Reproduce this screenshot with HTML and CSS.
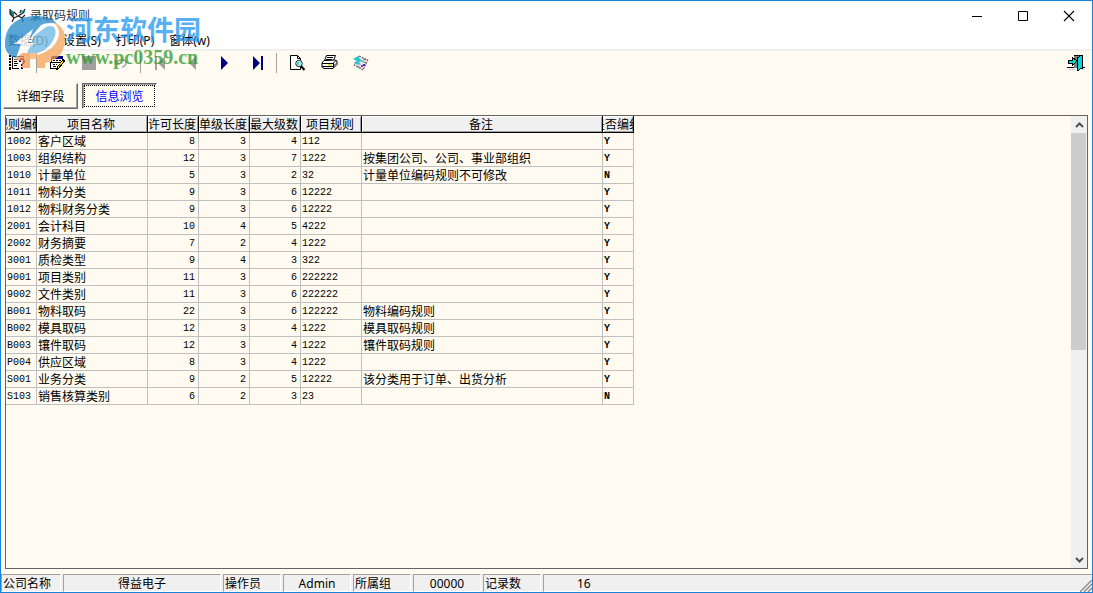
FILE: index.html
```html
<!DOCTYPE html>
<html lang="zh-CN">
<head>
<meta charset="utf-8">
<title>录取码规则</title>
<link rel="stylesheet" href="styles.css">
</head>
<body>
<div class="window">
  <header class="titlebar">
    <svg class="app-icon" width="18" height="16" viewBox="0 0 18 16"><path d="M1 1l4 3v5L1 6z" fill="#12806f"/><path d="M11 2h5v3h-4z" fill="#5bd6c8"/><path d="M1 1v5l4 4 4-2 4 2 3-3M5 4l3 3M16 1l-2 4-5 3M5 10l-2 4M13 10l1 4M12 2l-1 3" fill="none" stroke="#222" stroke-width="1.2"/></svg>
    <h1 class="title">录取码规则</h1>
    <div class="window-controls">
      <button class="control" aria-label="最小化"><svg width="12" height="12" viewBox="0 0 12 12"><path d="M1 6.5h10" stroke="#000"/></svg></button>
      <button class="control" aria-label="最大化"><svg width="12" height="12" viewBox="0 0 12 12"><path d="M1.500 1.500h9v9h-9z" fill="none" stroke="#000"/></svg></button>
      <button class="control" aria-label="关闭"><svg width="12" height="12" viewBox="0 0 12 12"><path d="M1 1l10 10M11 1L1 11" stroke="#000" stroke-width="1.100"/></svg></button>
    </div>
  </header>

  <nav class="menubar">
    <button class="menu disabled">数据(D)</button>
    <button class="menu">设置(S)</button>
    <button class="menu">打印(P)</button>
    <button class="menu">窗体(w)</button>
  </nav>

  <div class="toolbar">
    <button class="tool" aria-label="字段说明"><svg width="16" height="16" viewBox="0 0 16 16" shape-rendering="crispEdges"><path d="M0 1h15v13H0z" fill="#fff"/><path d="M0 0h2v2H0zM0 3h2v2H0zM0 6h2v2H0zM0 9h2v2H0zM0 12h2v3H0zM3 1h1v13H3zM4 1h11v1H4zM4 13h6v1H4zM5 4h4v1H5zM5 6h3v1H5zM5 8h4v1H5zM5 10h3v1H5z" fill="#000"/><path d="M11 3h4v2h-4zM10 5h2v2h-2zM14 5h2v3h-2zM13 8h2v1h-2zM12 9h2v2h-2zM12 12h2v2h-2z" fill="#000080"/></svg></button>
    <span class="separator"></span>
    <button class="tool" aria-label="编辑"><svg width="16" height="16" viewBox="0 0 16 16" shape-rendering="crispEdges"><path d="M2 3h12v4l-4 7H1V6z" fill="#fff"/><path d="M3 1h11v3H2V2z" fill="#000080"/><path d="M2 4h1v3H2zM13 4h1v3h-1zM1 7h10v1H1zM1 7h1v7H1zM1 13h8v1H1zM4 9h2v1H4zM7 9h1v1H7zM4 11h3v1H4zM4 5h2v1H4zM7 5h2v1H7zM10 5h2v1h-2z" fill="#000"/><path d="M14 4l2 2-6 8-3 1 1-3z" fill="#000"/><path d="M13 6h1v2h-1zM12 7h1v2h-1zM11 8h1v2h-1zM10 10h1v1h-1zM9 11h1v2H9z" fill="#ffe800"/></svg></button>
    <button class="tool" aria-label="保存" disabled><svg width="14" height="14" viewBox="0 0 14 14"><path d="M0 0h14v14H0z" fill="#a0a0a0"/></svg></button>
    <button class="tool" aria-label="撤消" disabled><svg width="14" height="14" viewBox="0 0 14 14"><path d="M1 4l1 4h4M2 8c2-5 10-6 10-1 0 2-2 4-4 4" fill="none" stroke="#a0a0a0" stroke-width="1.500"/></svg></button>
    <span class="separator"></span>
    <button class="tool" aria-label="第一条" disabled><svg width="14" height="14" viewBox="0 0 14 14"><path d="M1 0h2v14H1zM11 0v14L4 7z" fill="#a0a0a0"/></svg></button>
    <button class="tool" aria-label="上一条" disabled><svg width="14" height="14" viewBox="0 0 14 14"><path d="M10 0v14L3 7z" fill="#a0a0a0"/></svg></button>
    <button class="tool" aria-label="下一条"><svg width="14" height="14" viewBox="0 0 14 14"><path d="M3 0v14l7-7z" fill="#000080"/></svg></button>
    <button class="tool" aria-label="最后一条"><svg width="14" height="14" viewBox="0 0 14 14"><path d="M3 0v14l7-7zM11 0h2v14h-2z" fill="#000080"/></svg></button>
    <span class="separator"></span>
    <button class="tool" aria-label="预览"><svg width="16" height="16" viewBox="0 0 16 16"><path d="M1.500.5h7l3 3v11h-10z" fill="#fff" stroke="#000"/><path d="M8.500.5v3h3" fill="none" stroke="#000"/><circle cx="10" cy="8.500" r="3.300" fill="#a8eef2" stroke="#333"/><path d="M9 7v3" stroke="#0aa" /><path d="M12 11l3.500 4" stroke="#000" stroke-width="2"/></svg></button>
    <button class="tool" aria-label="打印"><svg width="17" height="16" viewBox="0 0 17 16"><path d="M5.500.5h9l-2 5h-9z" fill="#fff" stroke="#000"/><path d="M6 2.500h6M5 4.500h6" stroke="#000"/><path d="M3 5.500L1 8v4l2 1.500h9l4-4V6l-2-1z" fill="#fff" stroke="#000"/><path d="M1 8.500h11l3-3M1 11.500h11l3-3M12.500 8v5" fill="none" stroke="#000"/><path d="M7 10h4" stroke="#d8d800" stroke-width="1.500"/></svg></button>
    <button class="tool" aria-label="输出"><svg width="16" height="16" viewBox="0 0 16 16"><path d="M6 1l9 4-5 10L1 10z" fill="#e4e4e4" stroke="#444" stroke-dasharray="2 1"/><path d="M0 4l5-3 2 3 3 2-4 1 2 3-6-1 2-3z" fill="#28c8cf"/><path d="M10 4l3 1M9 6l4 2M4 11l4 2" stroke="#777"/><path d="M8 10h2v2H8z" fill="#d018a0"/><path d="M10 9h2v2h-2z" fill="#2038d8"/></svg></button>
    <button class="tool exit" aria-label="退出"><svg width="18" height="16" viewBox="0 0 18 16" shape-rendering="crispEdges"><path d="M7 0h8v13H7z" fill="#808080"/><path d="M7 0h9v1H7zM15 0h1v14h-1zM0 12h7v1H0zM15 12h3v1h-3z" fill="#000"/><path d="M10 3l5-3v13l-5 3z" fill="#00d8dc" stroke="#000"/><path d="M1 5h4V2l5 4-5 5V8H1z" fill="#00d8dc" stroke="#000"/><path d="M2 14h6v1H2zM15 14h2v1h-2z" fill="#ccc"/></svg></button>
  </div>

  <div class="tabs" role="tablist">
    <button class="tab" role="tab" aria-selected="false">详细字段</button>
    <button class="tab selected" role="tab" aria-selected="true"><span class="focus">信息浏览</span></button>
  </div>

  <main class="grid">
    <div class="grid-body">
      <table class="rules">
        <colgroup><col class="c-code"><col class="c-name"><col class="c-num"><col class="c-num"><col class="c-num"><col class="c-rule"><col class="c-note"><col class="c-flag"></colgroup>
        <thead>
          <tr><th><div class="head">规则编码</div></th><th><div class="head">项目名称</div></th><th><div class="head">许可长度</div></th><th><div class="head">单级长度</div></th><th><div class="head">最大级数</div></th><th><div class="head">项目规则</div></th><th><div class="head">备注</div></th><th><div class="head">是否编组</div></th></tr>
        </thead>
        <tbody>
          <tr><td>1002</td><td class="zh">客户区域</td><td class="num">8</td><td class="num">3</td><td class="num">4</td><td>112</td><td class="zh"></td><td class="flag">Y</td></tr>
          <tr><td>1003</td><td class="zh">组织结构</td><td class="num">12</td><td class="num">3</td><td class="num">7</td><td>1222</td><td class="zh">按集团公司、公司、事业部组织</td><td class="flag">Y</td></tr>
          <tr><td>1010</td><td class="zh">计量单位</td><td class="num">5</td><td class="num">3</td><td class="num">2</td><td>32</td><td class="zh">计量单位编码规则不可修改</td><td class="flag">N</td></tr>
          <tr><td>1011</td><td class="zh">物料分类</td><td class="num">9</td><td class="num">3</td><td class="num">6</td><td>12222</td><td class="zh"></td><td class="flag">Y</td></tr>
          <tr><td>1012</td><td class="zh">物料财务分类</td><td class="num">9</td><td class="num">3</td><td class="num">6</td><td>12222</td><td class="zh"></td><td class="flag">Y</td></tr>
          <tr><td>2001</td><td class="zh">会计科目</td><td class="num">10</td><td class="num">4</td><td class="num">5</td><td>4222</td><td class="zh"></td><td class="flag">Y</td></tr>
          <tr><td>2002</td><td class="zh">财务摘要</td><td class="num">7</td><td class="num">2</td><td class="num">4</td><td>1222</td><td class="zh"></td><td class="flag">Y</td></tr>
          <tr><td>3001</td><td class="zh">质检类型</td><td class="num">9</td><td class="num">4</td><td class="num">3</td><td>322</td><td class="zh"></td><td class="flag">Y</td></tr>
          <tr><td>9001</td><td class="zh">项目类别</td><td class="num">11</td><td class="num">3</td><td class="num">6</td><td>222222</td><td class="zh"></td><td class="flag">Y</td></tr>
          <tr><td>9002</td><td class="zh">文件类别</td><td class="num">11</td><td class="num">3</td><td class="num">6</td><td>222222</td><td class="zh"></td><td class="flag">Y</td></tr>
          <tr><td>B001</td><td class="zh">物料取码</td><td class="num">22</td><td class="num">3</td><td class="num">6</td><td>122222</td><td class="zh">物料编码规则</td><td class="flag">Y</td></tr>
          <tr><td>B002</td><td class="zh">模具取码</td><td class="num">12</td><td class="num">3</td><td class="num">4</td><td>1222</td><td class="zh">模具取码规则</td><td class="flag">Y</td></tr>
          <tr><td>B003</td><td class="zh">镶件取码</td><td class="num">12</td><td class="num">3</td><td class="num">4</td><td>1222</td><td class="zh">镶件取码规则</td><td class="flag">Y</td></tr>
          <tr><td>P004</td><td class="zh">供应区域</td><td class="num">8</td><td class="num">3</td><td class="num">4</td><td>1222</td><td class="zh"></td><td class="flag">Y</td></tr>
          <tr><td>S001</td><td class="zh">业务分类</td><td class="num">9</td><td class="num">2</td><td class="num">5</td><td>12222</td><td class="zh">该分类用于订单、出货分析</td><td class="flag">Y</td></tr>
          <tr><td>S103</td><td class="zh">销售核算类别</td><td class="num">6</td><td class="num">2</td><td class="num">3</td><td>23</td><td class="zh"></td><td class="flag">N</td></tr>
        </tbody>
      </table>
    </div>
    <div class="scrollbar">
      <button class="scroll-button" aria-label="向上滚动"><svg width="9" height="6" viewBox="0 0 9 6"><path d="M1 5l3.500-3.500L8 5" fill="none" stroke="#505050" stroke-width="2"/></svg></button>
      <div class="track"><div class="thumb"></div></div>
      <button class="scroll-button" aria-label="向下滚动"><svg width="9" height="6" viewBox="0 0 9 6"><path d="M1 1l3.500 3.500L8 1" fill="none" stroke="#505050" stroke-width="2"/></svg></button>
    </div>
  </main>

  <footer class="statusbar">
    <span class="panel label">公司名称</span>
    <span class="panel company">得益电子</span>
    <span class="panel label">操作员</span>
    <span class="panel value">Admin</span>
    <span class="panel label">所属组</span>
    <span class="panel value">00000</span>
    <span class="panel label">记录数</span>
    <span class="panel count">16</span>
    <svg class="grip" width="12" height="12" viewBox="0 0 12 12"><path d="M0 12L12 0M4 12l8-8M8 12l4-4" stroke="#909090" stroke-width="1.500"/></svg>
  </footer>

  <div class="watermark">
    <svg class="mark" width="61" height="56" viewBox="0 0 61 56">
      <path d="M0 34C-1 14 12 4 31 4c10 0 18 3 21 8-6-2-12-1-16 1L22 30l-5 12-6 4C4 44 1 40 0 34z" fill="#2287c9"/>
      <path d="M30 23l11-8c8-3 11 2 9 9-4 11-11 15-20 18h-8l5-13z" fill="#6db8e3"/>
      <path d="M47 10c9 2 14 10 13 19-1 13-9 20-20 22v5h-8V43c13-3 21-11 22-22 0-5-3-9-7-11z" fill="#f6a45a"/>
      <path d="M17 41h8v15h-8v-7l-8-1z" fill="#f39a55"/>
      <path d="M9 32l19-15-5 14h7L11 46l5-14z" fill="#fff"/>
      <path d="M25 41h7v6h-7z" fill="#f8ad72"/>
    </svg>
    <div class="brand">
      <span class="brand-name">河东软件园</span>
      <span class="brand-url">www.pc0359.cn</span>
    </div>
  </div>
</div>
</body>
</html>
```
FILE: styles.css
```css
* { box-sizing: border-box; }
body {
  margin: 0;
  font: 12px/16px "Noto Sans", "Noto Sans CJK SC", sans-serif;
  color: #000;
}
button {
  margin: 0;
  padding: 0;
  border: 0;
  background: none;
  font: inherit;
  color: inherit;
}
svg { display: block; }

.window {
  position: relative;
  display: flex;
  flex-direction: column;
  min-height: 100vh;
  border: 1px solid #1883d7;
  background: #fffbf0;
}

.titlebar {
  display: flex;
  align-items: center;
  height: 30px;
  padding-left: 8px;
  background: #fff;
}
.title {
  flex: 1;
  margin: 0 0 0 3px;
  font-size: 12px;
  font-weight: 400;
  color: #333;
}
.window-controls { display: flex; }
.control {
  display: flex;
  align-items: center;
  justify-content: center;
  width: 46px;
  height: 30px;
}

.menubar {
  display: flex;
  height: 20px;
  border-bottom: 2px solid #f0f0f0;
  background: #fff;
}
.menu { padding: 2px 8px 0 7px; }
.menu.disabled { color: #555; }

.toolbar {
  display: flex;
  align-items: center;
  height: 23px;
}
.tool {
  display: flex;
  align-items: center;
  justify-content: center;
  width: 32px;
  height: 23px;
}
.separator {
  width: 1px;
  height: 20px;
  margin: 0 4px 0 3px;
  background: #a0a0a0;
}
.exit { margin-left: auto; }

.tabs {
  display: flex;
  gap: 4px;
  padding: 9px 2px 6px;
}
.tab {
  width: 75px;
  height: 26px;
  padding: 2px 1px 1px;
  border: 1px solid;
  border-color: #fff #696969 #696969 #fff;
  box-shadow: inset -1px -1px #a0a0a0;
}
.tab.selected {
  padding: 1px;
  border-color: #696969 #fff #fff #696969;
  box-shadow: inset 1px 1px #a0a0a0;
  color: #00f;
}
.focus {
  display: block;
  height: 22px;
  border: 1px dotted #000;
  line-height: 21px;
}

.grid {
  display: flex;
  flex: 1;
  margin: 0 4px;
  border: 1px solid #646464;
}
.grid-body { flex: 1; }
.rules {
  width: 628px;
  border-collapse: separate;
  border-spacing: 0;
  table-layout: fixed;
}
.c-code, .c-flag { width: 31px; }
.c-name { width: 111px; }
.c-num { width: 51px; }
.c-rule { width: 61px; }
.c-note { width: 241px; }
.rules th {
  height: 17px;
  padding: 0;
  border-right: 1px solid #000;
  border-bottom: 1px solid #000;
  background: #f0f0f0;
  box-shadow: inset 1px 1px #fff, inset -1px -1px #a0a0a0;
  font-weight: 400;
}
.head {
  display: flex;
  justify-content: center;
  height: 16px;
  padding: 1px 2px 0 0;
  overflow: hidden;
  line-height: 16px;
  white-space: nowrap;
}
.rules td {
  height: 17px;
  padding: 2px 2px 0 1px;
  border-right: 1px solid #c0c0c0;
  border-bottom: 1px solid #c0c0c0;
  font: 10px/14px "Liberation Mono", monospace;
  white-space: nowrap;
}
.rules .zh {
  padding-top: 0;
  font: 12px/16px "Noto Sans CJK SC", sans-serif;
}
.rules .num {
  padding-right: 3px;
  text-align: right;
}
.rules .flag { font-weight: 700; }

.scrollbar {
  display: flex;
  flex-direction: column;
  width: 16px;
  background: #f0f0f0;
}
.scroll-button {
  display: flex;
  align-items: center;
  justify-content: center;
  height: 17px;
}
.track { flex: 1; }
.thumb {
  width: 15px;
  height: 52%;
  background: #cdcdcd;
}

.statusbar {
  position: relative;
  display: flex;
  gap: 2px;
  margin-top: 5px;
  background: #f0f0f0;
}
.panel {
  height: 18px;
  border: 1px solid;
  border-color: #a0a0a0 #fff #fff #a0a0a0;
  line-height: 18px;
  text-align: center;
}
.label {
  width: 58px;
  padding-left: 1px;
  text-align: left;
}
.label:first-child { width: 60px; }
.company { width: 158px; }
.value { width: 68px; }
.count {
  flex: 1;
  padding-left: 33px;
  border-right: 0;
  text-align: left;
}
.grip {
  position: absolute;
  right: 0;
  bottom: 0;
}

.watermark {
  position: absolute;
  top: 11px;
  left: 4px;
  display: flex;
  opacity: 0.75;
  pointer-events: none;
}
.brand {
  display: flex;
  flex-direction: column;
}
.brand-name {
  font: 700 27px/34px "Noto Sans CJK SC", sans-serif;
  color: #2196f0;
}
.brand-url {
  font: 700 20px/22px "Liberation Serif", serif;
  color: #2a9a2a;
}
```
